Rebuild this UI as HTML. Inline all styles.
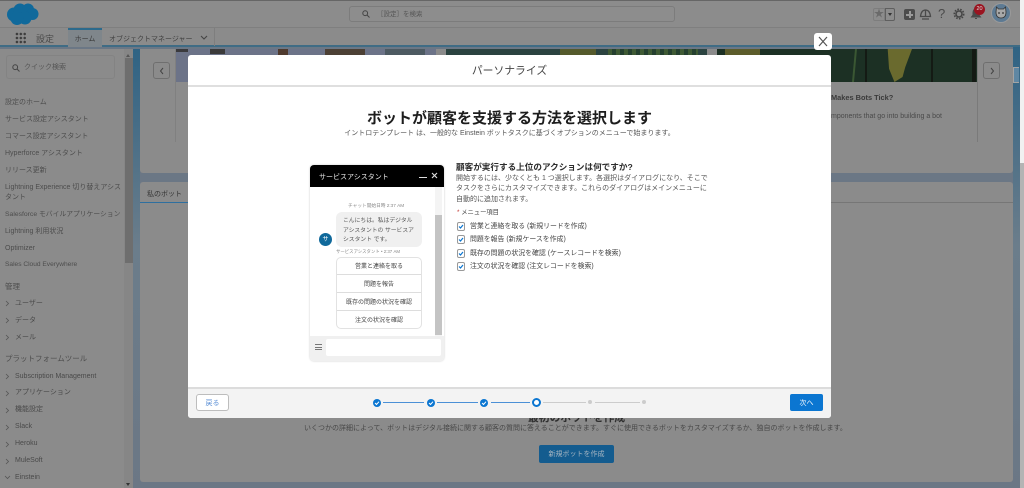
<!DOCTYPE html>
<html lang="ja"><head><meta charset="utf-8"><title>設定</title>
<style>
*{box-sizing:border-box}
html,body{margin:0;padding:0}
body{width:1024px;height:488px;position:relative;overflow:hidden;background:#6b7785;font-family:"Liberation Sans","Noto Sans CJK JP",sans-serif;color:#3a3a3a;font-size:7px}
.a{position:absolute;white-space:nowrap}
.nav{left:5px;font-size:7px;color:#4d4d4d;line-height:12px;margin-top:1px}
.tw{left:5px;color:#4d4d4d;font-size:7.500px;line-height:12px;margin-top:1px}
.sub{left:15px;font-size:7px;color:#4a4a4a;line-height:12px;margin-top:1px}
.opt{text-align:center;font-size:6px;line-height:20px;color:#444;border-bottom:1px solid #ddd;height:18px}
.cb{left:457px;width:8px;height:9px;border:1px solid #999;border-radius:2px;background:#fff}
.cl{left:470px;font-size:6.900px;line-height:10px;color:#444;margin-top:1px}
.dot{width:8px;height:8px;border-radius:50%;background:#0b76d1}
.ln{height:1px;background:#4b90d6;top:402px}
.lg{height:1px;background:#ccc;top:402px}
</style></head><body>
<!-- right strip and browser scrollbar -->
<div class="a" style="left:1013px;top:47px;width:7px;height:441px;background:linear-gradient(170deg,#2f6384,#6b7d8b 45%,#6b7785)"></div>
<div class="a" style="left:1020px;top:0;width:4px;height:488px;background:#f1f1f1"></div>
<div class="a" style="left:1020px;top:163px;width:4px;height:325px;background:#b4b4b4"></div>
<!-- top bars -->
<div class="a" style="left:0;top:0;width:1020px;height:1px;background:#666"></div>
<div class="a" style="left:0;top:1px;width:1020px;height:27px;background:#8c8c8c;border-bottom:1px solid #7f7f7f"></div>
<div class="a" style="left:0;top:28px;width:1020px;height:19px;background:#8b8b8b;border-bottom:2px solid #3f6c85"></div>
<svg class="a" style="left:6px;top:2px" width="34" height="24" viewBox="0 0 34 24"><g fill="#10699b"><circle cx="8" cy="12.500" r="7"/><circle cx="14" cy="8" r="6.500"/><circle cx="22" cy="7.500" r="6"/><circle cx="26.500" cy="12" r="6"/><circle cx="19" cy="16" r="6.500"/><circle cx="11" cy="16.500" r="6.500"/></g></svg>
<div class="a" style="left:349px;top:6px;width:326px;height:16px;border:1px solid #7c7c7c;border-radius:3px;background:#8d8d8d"></div>
<svg class="a" style="left:362px;top:10px" width="8" height="8" viewBox="0 0 8 8"><circle cx="3.200" cy="3.200" r="2.400" fill="none" stroke="#444"/><path d="M5 5l2.500 2.500" stroke="#444"/></svg>
<div class="a" style="left:377px;top:8.500px;font-size:6.500px;line-height:12px;color:#555">［設定］を検索</div>
<!-- global icons -->
<div class="a" style="left:873px;top:8px;width:12px;height:13px;border:1px solid #7d7d7d;border-radius:2px 0 0 2px;color:#6a6a6a;font-size:10px;line-height:11px;text-align:center">★</div>
<div class="a" style="left:885px;top:8px;width:10px;height:13px;border:1px solid #5f5f5f;border-radius:0 2px 2px 0"></div>
<div class="a" style="left:888px;top:13px;width:0;height:0;border:2.500px solid transparent;border-top:3px solid #333"></div>
<div class="a" style="left:904px;top:9px;width:11px;height:11px;border-radius:2px;background:#4c4c4c"></div>
<div class="a" style="left:906px;top:14px;width:7px;height:1.500px;background:#9a9a9a"></div>
<div class="a" style="left:909px;top:11px;width:1.500px;height:7px;background:#9a9a9a"></div>
<svg class="a" style="left:919px;top:8px" width="13" height="13" viewBox="0 0 13 13"><path d="M1.500 8.500C2 4 4 2 6.500 2S11 4 11.500 8.500zM6.500 2v6.500M3 11h7" fill="none" stroke="#4a4a4a" stroke-width="1.300"/></svg>
<div class="a" style="left:938px;top:6px;font-size:13px;line-height:16px;color:#4a4a4a">?</div>
<svg class="a" style="left:953px;top:8px" width="12" height="12" viewBox="0 0 12 12"><circle cx="6" cy="6" r="3" fill="none" stroke="#444" stroke-width="1.500"/><circle cx="6" cy="6" r="4.700" fill="none" stroke="#444" stroke-width="1.600" stroke-dasharray="1.600 1.300"/></svg>
<svg class="a" style="left:970px;top:8px" width="12" height="12" viewBox="0 0 12 12"><path d="M6 1C3.500 1 3 3 3 5v2L1.500 9h9L9 7V5C9 3 8.500 1 6 1zM5 10.500h2" fill="#4a4a4a" stroke="#4a4a4a"/></svg>
<div class="a" style="left:974px;top:4px;width:11px;height:11px;border-radius:50%;background:#9a1420;color:#ddd;font-size:5.500px;line-height:11px;text-align:center">20</div>
<svg class="a" style="left:991px;top:3px" width="20" height="20" viewBox="0 0 20 20"><circle cx="10" cy="10" r="9.500" fill="#5d7a93" stroke="#9a9a9a"/><path d="M5.500 4l2 2h5l2-2 .5 5c0 4-2 6-5 6s-5-2-5-6z" fill="#a8a8a8" stroke="#333" stroke-width=".8"/><circle cx="8" cy="10" r=".9" fill="#333"/><circle cx="12" cy="10" r=".9" fill="#333"/></svg>
<!-- nav -->
<div class="a" style="left:15px;top:32px;width:11px;height:12px;background-image:radial-gradient(circle,#3d3d3d 1.200px,transparent 1.400px);background-size:3.900px 4px"></div>
<div class="a" style="left:36px;top:30.500px;font-size:9px;line-height:16px;color:#4a4a4a">設定</div>
<div class="a" style="left:68px;top:28px;width:34px;height:19px;background:#7f868b;border-top:2px solid #2c6a8c;text-align:center;font-size:7px;line-height:19px;color:#3a3a3a">ホーム</div>
<div class="a" style="left:109px;top:32.500px;font-size:7px;line-height:13px;color:#3f3f3f">オブジェクトマネージャー</div>
<svg class="a" style="left:200px;top:35px" width="8" height="6" viewBox="0 0 8 6"><path d="M1 1l3 3 3-3" fill="none" stroke="#444" stroke-width="1.100"/></svg>
<div class="a" style="left:214px;top:28px;width:1px;height:18px;background:#7e7e7e"></div>
<!-- sidebar -->
<div class="a" style="left:0;top:49px;width:133px;height:439px;background:#8b8b8b"></div>
<div class="a" style="left:133px;top:49px;width:7px;height:439px;background:linear-gradient(170deg,#2f6384,#6b7d8b 45%,#6b7785)"></div>
<div class="a" style="left:124px;top:49px;width:9px;height:439px;background:#868686"></div>
<div class="a" style="left:125px;top:58px;width:8px;height:205px;background:#6e6e6e"></div>
<div class="a" style="left:126px;top:52px;width:0;height:0;border:2px solid transparent;border-bottom:3px solid #555"></div>
<div class="a" style="left:126px;top:483px;width:0;height:0;border:2px solid transparent;border-top:3px solid #333"></div>
<div class="a" style="left:6px;top:55px;width:109px;height:24px;border:1px solid #838383;border-radius:3px"></div>
<svg class="a" style="left:12px;top:64px" width="8" height="8" viewBox="0 0 8 8"><circle cx="3.200" cy="3.200" r="2.400" fill="none" stroke="#444"/><path d="M5 5l2.500 2.500" stroke="#444"/></svg>
<div class="a" style="left:24px;top:62px;font-size:7px;line-height:12px;color:#555">クイック検索</div>
<div class="a nav" style="top:96px">設定のホーム</div>
<div class="a nav" style="top:113px">サービス設定アシスタント</div>
<div class="a nav" style="top:130px">コマース設定アシスタント</div>
<div class="a nav" style="top:147px">Hyperforce アシスタント</div>
<div class="a nav" style="top:164px">リリース更新</div>
<div class="a nav" style="top:181px">Lightning Experience 切り替えアシス</div>
<div class="a nav" style="top:191px">タント</div>
<div class="a nav" style="top:208px;font-size:6.800px">Salesforce モバイルアプリケーション</div>
<div class="a nav" style="top:225px">Lightning 利用状況</div>
<div class="a nav" style="top:242px">Optimizer</div>
<div class="a nav" style="top:258px;font-size:6.600px">Sales Cloud Everywhere</div>
<div class="a tw" style="top:280px">管理</div>
<div class="a sub" style="top:297px">ユーザー</div>
<div class="a sub" style="top:314px">データ</div>
<div class="a sub" style="top:331px">メール</div>
<div class="a tw" style="top:352px">プラットフォームツール</div>
<div class="a sub" style="top:370px">Subscription Management</div>
<div class="a sub" style="top:386px">アプリケーション</div>
<div class="a sub" style="top:403px">機能設定</div>
<div class="a sub" style="top:420px">Slack</div>
<div class="a sub" style="top:437px">Heroku</div>
<div class="a sub" style="top:454px">MuleSoft</div>
<div class="a sub" style="top:471px">Einstein</div>
<svg class="a" style="left:4px;top:298px" width="7" height="185" viewBox="0 0 7 185" fill="none" stroke="#555" stroke-width=".8"><path d="M2 3l2.500 2.500L2 8M2 20l2.500 2.500L2 25M2 37l2.500 2.500L2 42M2 76l2.500 2.500L2 81M2 93l2.500 2.500L2 98M2 110l2.500 2.500L2 115M2 127l2.500 2.500L2 132M2 144l2.500 2.500L2 149M2 161l2.500 2.500L2 166M1 178l2.500 2.500L6 178"/></svg>
<!-- content cards -->
<div class="a" style="left:140px;top:49px;width:873px;height:124px;background:#8b8b8b;border-radius:0 0 3px 3px"></div>
<div class="a" style="left:176px;top:49px;width:260px;height:33px;background:#6c7388"></div>
<div class="a" style="left:176px;top:49px;width:12px;height:3px;background:#3a3a3d"></div>
<div class="a" style="left:210px;top:49px;width:15px;height:5px;background:#3b3a3a"></div>
<div class="a" style="left:278px;top:49px;width:10px;height:6px;background:#4f3a2e"></div>
<div class="a" style="left:325px;top:49px;width:40px;height:6px;background:#4c4035"></div>
<div class="a" style="left:385px;top:49px;width:40px;height:6px;background:#4d5a62"></div>
<div class="a" style="left:446px;top:49px;width:261px;height:33px;background:#2b4340"></div>
<div class="a" style="left:560px;top:49px;width:36px;height:6px;background:#555a2c"></div>
<div class="a" style="left:608px;top:49px;width:90px;height:6px;background:repeating-linear-gradient(90deg,#3f5a34 0 4px,#25402f 4px 8px)"></div>
<div class="a" style="left:717px;top:49px;width:260px;height:33px;background:#1c3024"></div>
<div class="a" style="left:725px;top:49px;width:35px;height:6px;background:#5c5c2b"></div>
<div class="a" style="left:885px;top:49px;width:27px;height:33px;background:#6a6a2e;clip-path:polygon(10% 0,100% 0,75% 55%,65% 85%,35% 100%,15% 60%)"></div>
<div class="a" style="left:852px;top:49px;width:5px;height:33px;background:#3a5733;clip-path:polygon(60% 0,100% 0,40% 100%,0 100%)"></div>
<div class="a" style="left:865px;top:49px;width:1.500px;height:33px;background:#141a14"></div>
<div class="a" style="left:931px;top:49px;width:1.500px;height:33px;background:#141a14"></div>
<div class="a" style="left:972px;top:49px;width:4px;height:33px;background:#141a14"></div>
<div class="a" style="left:175px;top:49px;width:1px;height:93px;background:#808080"></div>
<div class="a" style="left:831px;top:92px;font-size:7.400px;font-weight:bold;line-height:12px;color:#3a3a3a">Makes Bots Tick?</div>
<div class="a" style="left:831px;top:111px;font-size:7px;line-height:12px;color:#4a4a4a">mponents that go into building a bot</div>
<div class="a" style="left:977px;top:49px;width:1px;height:93px;background:#7a7a7a"></div>
<div class="a" style="left:153px;top:62px;width:17px;height:17px;border:1px solid #6f6f6f;border-radius:3px;background:#8b8b8b"></div>
<svg class="a" style="left:159px;top:67px" width="6" height="8" viewBox="0 0 6 8"><path d="M4 1L1.500 4 4 7" fill="none" stroke="#444"/></svg>
<div class="a" style="left:983px;top:62px;width:17px;height:17px;border:1px solid #6f6f6f;border-radius:3px;background:#8b8b8b"></div>
<svg class="a" style="left:989px;top:67px" width="6" height="8" viewBox="0 0 6 8"><path d="M2 1l2.500 3L2 7" fill="none" stroke="#444"/></svg>
<div class="a" style="left:1013px;top:67px;width:6px;height:16px;background:#5f87a3;border:1px solid #a4a4a4;border-right:0"></div>
<div class="a" style="left:140px;top:182px;width:873px;height:300px;background:#8b8b8b;border-radius:3px"></div>
<div class="a" style="left:140px;top:202px;width:873px;height:1px;background:#767676"></div>
<div class="a" style="left:140px;top:202px;width:48px;height:1px;background:#2e6f9f"></div>
<div class="a" style="left:147px;top:188.500px;font-size:7px;line-height:12px;color:#333">私のボット</div>
<div class="a" style="left:528px;top:411px;font-size:10.800px;font-weight:bold;line-height:14px;color:#2f2f2f">最初のボットを作成</div>
<div class="a" style="left:304px;top:421.500px;font-size:7px;line-height:13px;color:#474747">いくつかの詳細によって、ボットはデジタル接続に関する顧客の質問に答えることができます。すぐに使用できるボットをカスタマイズするか、独自のボットを作成します。</div>
<div class="a" style="left:539px;top:445px;width:75px;height:18px;background:#145c8f;border-radius:2px;font-size:7px;line-height:20px;text-align:center;color:#a8b6c2">新規ボットを作成</div>
<!-- modal -->
<div class="a" style="left:188px;top:55px;width:643px;height:363px;background:#fff;border-radius:3px"></div>
<div class="a" style="left:188px;top:85px;width:643px;height:2px;background:#dfdfdf"></div>
<div class="a" style="left:188px;top:55px;width:643px;height:30px;text-align:center;font-size:10.800px;line-height:33px;color:#444">パーソナライズ</div>
<div class="a" style="left:814px;top:33px;width:18px;height:17px;background:#fff;border-radius:3px"></div>
<svg class="a" style="left:818px;top:36px" width="10" height="11" viewBox="0 0 10 11"><path d="M1 1l8 9M9 1l-8 9" stroke="#555" stroke-width="1.200"/></svg>
<div class="a" style="left:188px;top:109px;width:643px;text-align:center;font-size:15px;font-weight:bold;line-height:20px;color:#1d1d1d">ボットが顧客を支援する方法を選択します</div>
<div class="a" style="left:188px;top:127.500px;width:643px;text-align:center;font-size:7px;line-height:12px;color:#555">イントロテンプレート は、一般的な Einstein ボットタスクに基づくオプションのメニューで始まります。</div>
<!-- chat -->
<div class="a" style="left:310px;top:165px;width:134px;height:196px;background:#fff;box-shadow:0 0 2px #ccc;border-radius:4px"></div>
<div class="a" style="left:310px;top:165px;width:134px;height:22px;background:#000;border-radius:4px 4px 0 0"></div>
<div class="a" style="left:319px;top:172px;font-size:7px;line-height:12px;color:#e8e8e8">サービスアシスタント</div>
<div class="a" style="left:419px;top:177px;width:8px;height:1px;background:#ddd"></div>
<svg class="a" style="left:431px;top:172px" width="7" height="7" viewBox="0 0 7 7"><path d="M1 1l5 5M6 1L1 6" stroke="#ddd" stroke-width="1.200"/></svg>
<div class="a" style="left:435px;top:187px;width:7px;height:149px;background:#f4f4f4"></div>
<div class="a" style="left:435px;top:215px;width:7px;height:120px;background:#c4c4c4"></div>
<div class="a" style="left:348px;top:202px;font-size:4.700px;line-height:8px;color:#888">チャット開始日時 2:37 AM</div>
<div class="a" style="left:336px;top:212px;width:86px;height:35px;background:#f0f0f0;border-radius:6px;padding:5px 7px;font-size:5.800px;line-height:9.500px;color:#555">こんにちは。私はデジタル<br>アシスタントの サービスア<br>シスタント です。</div>
<div class="a" style="left:319px;top:233px;width:13px;height:13px;border-radius:50%;background:#10699b;color:#fff;font-size:6px;line-height:15px;text-align:center">サ</div>
<div class="a" style="left:336px;top:247.500px;font-size:4.400px;line-height:8px;color:#888">サービスアシスタント • 2:37 AM</div>
<div class="a" style="left:336px;top:257px;width:86px;height:72px;border:1px solid #e2e2e2;border-radius:5px"></div>
<div class="a opt" style="left:337px;top:257px;width:84px">営業と連絡を取る</div>
<div class="a opt" style="left:337px;top:275px;width:84px">問題を報告</div>
<div class="a opt" style="left:337px;top:293px;width:84px">既存の問題の状況を確認</div>
<div class="a opt" style="left:337px;top:311px;width:84px;border-bottom:0">注文の状況を確認</div>
<div class="a" style="left:310px;top:336px;width:134px;height:25px;background:#f0f0f0;border-radius:0 0 4px 4px"></div>
<div class="a" style="left:326px;top:339px;width:115px;height:17px;background:#fff;border-radius:2px"></div>
<div class="a" style="left:315px;top:344px;width:7px;height:6px;border-top:1px solid #777;border-bottom:1px solid #777"></div>
<div class="a" style="left:315px;top:346.500px;width:7px;height:1px;background:#777"></div>
<!-- right column -->
<div class="a" style="left:456px;top:161px;font-size:8.600px;font-weight:bold;line-height:12px;color:#2c2c2c">顧客が実行する上位のアクションは何ですか?</div>
<div class="a" style="left:456px;top:174px;font-size:7px;line-height:10.300px;color:#555">開始するには、少なくとも 1 つ選択します。各選択はダイアログになり、そこで<br>タスクをさらにカスタマイズできます。これらのダイアログはメインメニューに<br>自動的に追加されます。</div>
<div class="a" style="left:457px;top:208px;font-size:6.300px;line-height:10px;color:#444"><span style="color:#c23934">*</span> メニュー項目</div>
<div class="a cb" style="top:222px"></div><div class="a cl" style="top:221px">営業と連絡を取る (新規リードを作成)</div>
<div class="a cb" style="top:235px"></div><div class="a cl" style="top:234px">問題を報告 (新規ケースを作成)</div>
<div class="a cb" style="top:249px"></div><div class="a cl" style="top:248px">既存の問題の状況を確認 (ケースレコードを検索)</div>
<div class="a cb" style="top:262px"></div><div class="a cl" style="top:261px">注文の状況を確認 (注文レコードを検索)</div>
<svg class="a" style="left:457px;top:222px" width="9" height="50" viewBox="0 0 9 50" fill="none" stroke="#0b76d1" stroke-width="1.200"><path d="M2 4.500l1.500 1.500 2.500-3M2 17.500l1.500 1.500 2.500-3M2 31.500l1.500 1.500 2.500-3M2 44.500l1.500 1.500 2.500-3"/></svg>
<!-- footer -->
<div class="a" style="left:188px;top:387px;width:643px;height:31px;background:#f3f3f3;border-top:2px solid #dcdcdc;border-radius:0 0 3px 3px"></div>
<div class="a" style="left:196px;top:394px;width:33px;height:17px;background:#fff;border:1px solid #bdbdbd;border-radius:3px;text-align:center;font-size:7px;line-height:17px;color:#5b8fd6">戻る</div>
<div class="a" style="left:790px;top:394px;width:33px;height:17px;background:#0b76d1;border-radius:2px;text-align:center;font-size:7px;line-height:19px;color:#fff">次へ</div>
<div class="a dot" style="left:373px;top:399px"></div>
<div class="a dot" style="left:427px;top:399px"></div>
<div class="a dot" style="left:480px;top:399px"></div>
<svg class="a" style="left:373px;top:399px" width="115" height="8" viewBox="0 0 115 8" fill="none" stroke="#fff"><path d="M2 4l1.500 1.500L6 2.700M56 4l1.500 1.500L60 2.700M109 4l1.500 1.500L113 2.700"/></svg>
<div class="a ln" style="left:383px;width:41px"></div>
<div class="a ln" style="left:437px;width:41px"></div>
<div class="a ln" style="left:491px;width:39px"></div>
<div class="a" style="left:532px;top:398px;width:9px;height:9px;border-radius:50%;background:#fff;border:2px solid #0b76d1"></div>
<div class="a lg" style="left:543px;width:43px"></div>
<div class="a" style="left:588px;top:400px;width:4px;height:4px;border-radius:50%;background:#ccc"></div>
<div class="a lg" style="left:595px;width:45px"></div>
<div class="a" style="left:642px;top:400px;width:4px;height:4px;border-radius:50%;background:#ccc"></div>
</body></html>
